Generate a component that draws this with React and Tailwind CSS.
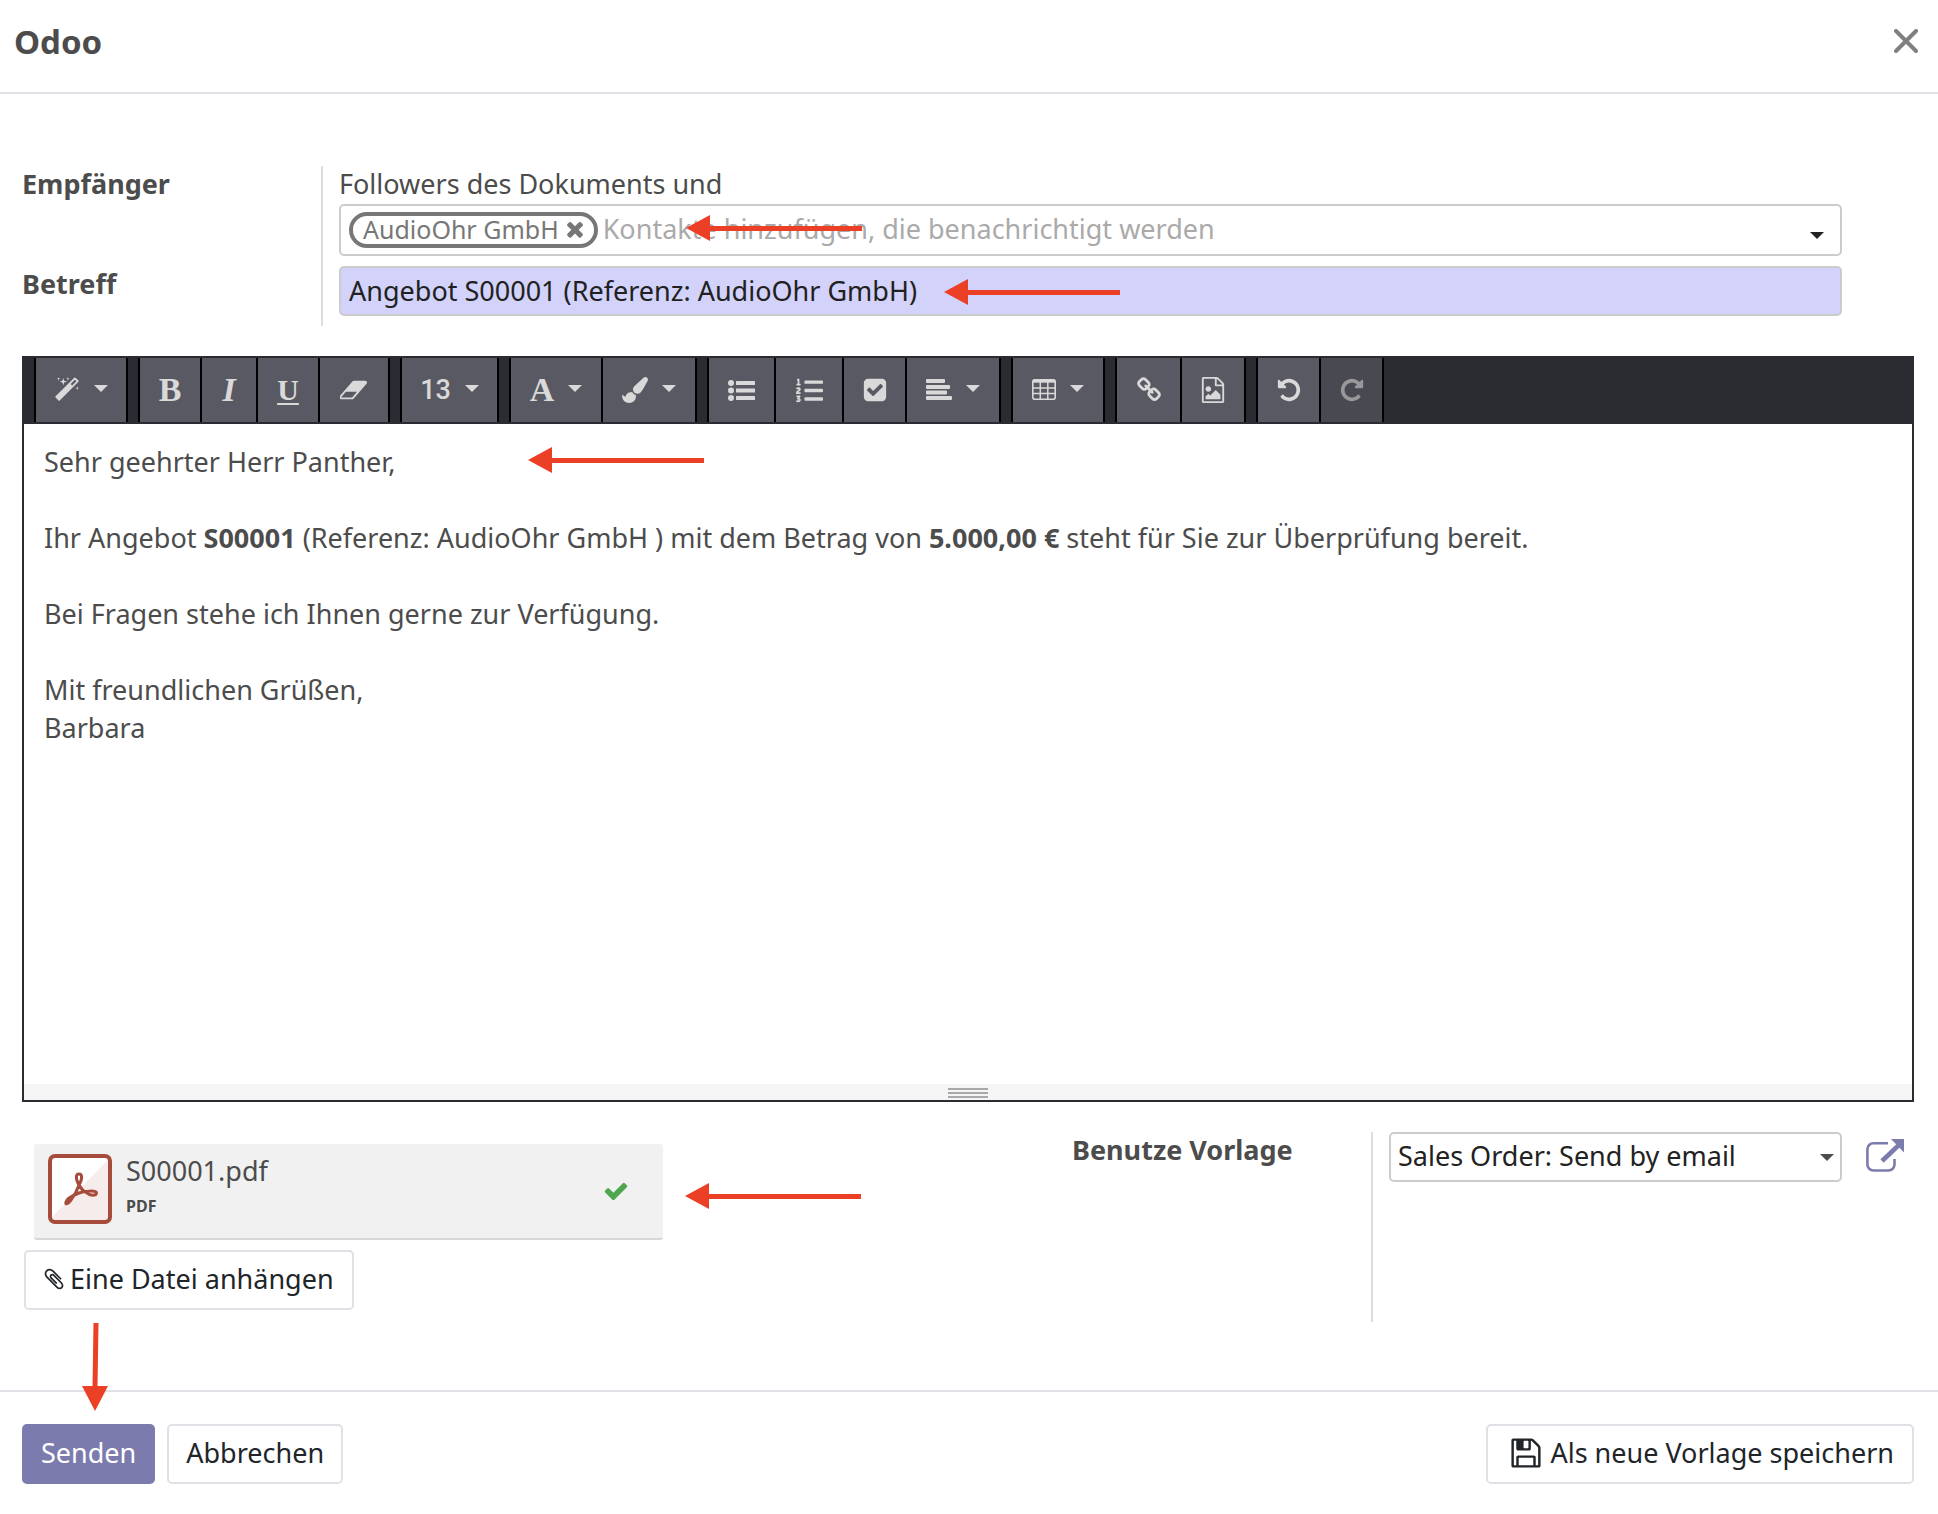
import React, { useState } from 'react';
import { FaListOl } from 'react-icons/fa';

const PATHS = {
  magic: 'M1254 581l293-293-107-107-293 293zm447-293q0 27-18 45l-1286 1286q-18 18-45 18t-45-18l-198-198q-18-18-18-45t18-45l1286-1286q18-18 45-18t45 18l198 198q18 18 18 45zm-1351-190l98 30-98 30-30 98-30-98-98-30 98-30 30-98zm350 162l196 60-196 60-60 196-60-196-196-60 196-60 60-196zm930 478l98 30-98 30-30 98-30-98-98-30 98-30 30-98zm-640-640l98 30-98 30-30 98-30-98-98-30 98-30 30-98z',
  eraser: 'M832 1408l336-384h-768l-336 384h768zm1013-1077q15 34 9.5 71.5t-30.5 65.5l-896 1024q-38 44-96 44h-768q-38 0-69.5-20.5t-47.5-54.5q-15-34-9.5-71.5t30.5-65.5l896-1024q38-44 96-44h768q38 0 69.5 20.5t47.5 54.5z',
  brush: 'M1615 0q70 0 122.5 46.5t52.5 116.5q0 63-45 151-332 629-465 752-97 91-218 91-126 0-216.5-92.5t-90.5-219.5q0-128 92-212l638-579q59-54 130-54zm-909 1034q39 76 106.5 130t150.5 76l1 71q4 213-129.5 347t-348.5 134q-123 0-218-46.5t-152.5-127.5-86.5-183-29-220q7 5 41 30t62 44.5 59 36.5 46 17q41 0 55-37 25-66 57.5-112.5t69.5-76 88-47.5 103-25.5 125-10.5z',
  checkSquare: 'M813 1299l614-614q19-19 19-45t-19-45l-102-102q-19-19-45-19t-45 19l-467 467-211-211q-19-19-45-19t-45 19l-102 102q-19 19-19 45t19 45l358 358q19 19 45 19t45-19zm851-883v960q0 119-84.5 203.5t-203.5 84.5h-960q-119 0-203.5-84.5t-84.5-203.5v-960q0-119 84.5-203.5t203.5-84.5h960q119 0 203.5 84.5t84.5 203.5z',
  link: 'M1520 1216q0-40-28-68l-208-208q-28-28-68-28-42 0-72 32 3 3 19 18.5t21.5 21.5 15 19 13 25.5 3.5 27.5q0 40-28 68t-68 28q-15 0-27.5-3.5t-25.5-13-19-15-21.5-21.5-18.5-19q-33 31-33 73 0 40 28 68l206 207q27 27 68 27 40 0 68-26l147-146q28-28 28-67zm-703-705q0-40-28-68l-206-207q-28-28-68-28-39 0-68 27l-147 146q-28 28-28 67 0 40 28 68l208 208q27 27 68 27 42 0 72-31-3-3-19-18.5t-21.5-21.5-15-19-13-25.5-3.5-27.5q0-40 28-68t68-28q15 0 27.5 3.5t25.5 13 19 15 21.5 21.5 18.5 19q33-31 33-73zm895 705q0 120-85 203l-147 146q-83 83-203 83-121 0-204-85l-206-207q-83-83-83-203 0-123 88-209l-88-88q-86 88-208 88-120 0-204-84l-208-208q-84-84-84-204t85-203l147-146q83-83 203-83 121 0 204 85l206 207q83 83 83 203 0 123-88 209l88 88q86-88 208-88 120 0 204 84l208 208q84 84 84 204z',
  image: 'M1596 380q28 28 48 76t20 88v1152q0 40-28 68t-68 28h-1344q-40 0-68-28t-28-68v-1600q0-40 28-68t68-28h896q40 0 88 20t76 48zm-444-244v376h376q-10-29-22-41l-313-313q-12-12-41-22zm384 1528v-1024h-416q-40 0-68-28t-28-68v-416h-768v1536h1280zm-128-448v320h-1024v-192l192-192 128 128 384-384zm-832-192q-80 0-136-56t-56-136 56-136 136-56 136 56 56 136-56 136-136 56z',
  undo: 'M1664 896q0 156-61 298t-164 245-245 164-298 61q-172 0-327-72.5t-264-204.5q-7-10-6.5-22.5t8.5-20.5l137-138q10-9 25-9 16 2 23 12 73 95 179 147t225 52q104 0 198.5-40.5t163.5-109.5 109.5-163.5 40.5-198.5-40.5-198.5-109.5-163.5-163.5-109.5-198.5-40.5q-98 0-188 35.5t-160 101.5l137 138q31 30 14 69-17 40-59 40h-448q-26 0-45-19t-19-45v-448q0-42 40-59 39-17 69 14l130 129q107-101 244.5-156.5t284.5-55.5q156 0 298 61t245 164 164 245 61 298z',
  times: 'M1490 1322q0 40-28 68l-136 136q-28 28-68 28t-68-28l-294-294-294 294q-28 28-68 28t-68-28l-136-136q-28-28-28-68t28-68l294-294-294-294q-28-28-28-68t28-68l136-136q28-28 68-28t68 28l294 294 294-294q28-28 68-28t68 28l136 136q28 28 28 68t-28 68l-294 294 294 294q28 28 28 68z',
  check: 'M1671 566q0 40-28 68l-724 724-136 136q-28 28-68 28t-68-28l-136-136-362-362q-28-28-28-68t28-68l136-136q28-28 68-28t68 28l294 295 656-657q28-28 68-28t68 28l136 136q28 28 28 68z',
  paperclip: 'M1596 1385q0 117-79 196t-196 79q-135 0-235-100l-777-776q-113-115-113-271 0-159 110-270t269-111q158 0 273 113l605 606q10 10 10 22 0 16-30.5 46.5t-46.5 30.5q-13 0-23-10l-606-607q-79-77-181-77-106 0-179 75t-73 181q0 105 76 181l776 777q63 63 145 63 64 0 106-42t42-106q0-82-63-145l-581-581q-26-24-60-24-29 0-48 19t-19 48q0 32 25 59l410 410q10 10 10 22 0 16-31 47t-47 31q-12 0-22-10l-410-410q-63-61-63-149 0-82 57-139t139-57q88 0 149 63l581 581q100 98 100 235z',
  floppy: 'M512 1536h768v-384h-768v384zm896 0h128v-896q0-14-10-38.5t-20-34.5l-281-281q-10-10-34-20t-39-10v416q0 40-28 68t-68 28h-576q-40 0-68-28t-28-68v-416h-128v1280h128v-416q0-40 28-68t68-28h832q40 0 68 28t28 68v416zm-384-928v-320q0-13-9.5-22.5t-22.5-9.5h-192q-13 0-22.5 9.5t-9.5 22.5v320q0 13 9.5 22.5t22.5 9.5h192q13 0 22.5-9.5t9.5-22.5zm640 32v928q0 40-28 68t-68 28h-1344q-40 0-68-28t-28-68v-1344q0-40 28-68t68-28h928q40 0 88 20t76 48l280 280q28 28 48 76t20 88z',
};

const Icon = ({ name, className = 'size-[26px]', box = '0 0 1792 1792' }) => (
  <svg viewBox={box} fill="currentColor" aria-hidden="true" className={`shrink-0 ${className}`}>
    <path d={PATHS[name]} />
  </svg>
);

const ListIcon = () => (
  <svg viewBox="0 0 27 26" fill="currentColor" aria-hidden="true" className="h-[26px] w-[27px]">
    {[6, 13.5, 21].map(y => (
      <g key={y}>
        <circle cx="3" cy={y} r="3" />
        <rect x="8" y={y - 2} width="19" height="4" rx="0.5" />
      </g>
    ))}
  </svg>
);

const AlignIcon = () => (
  <svg viewBox="0 0 26 26" fill="currentColor" aria-hidden="true" className="size-[26px]">
    <rect y="2" width="19" height="4" rx="1" />
    <rect y="8" width="24" height="4" rx="1" />
    <rect y="13.500" width="21" height="4" rx="1" />
    <rect y="19" width="26" height="4" rx="1" />
  </svg>
);

const TableIcon = () => (
  <svg viewBox="0 0 24 26" fill="none" stroke="currentColor" aria-hidden="true" className="h-[26px] w-6">
    <rect x="0.8" y="2.8" width="22.4" height="19.4" rx="2" strokeWidth="1.6" />
    <path d="M1 4.200h22" strokeWidth="3" />
    <path d="M1 11h22M1 16.500h22M8.300 4v18M15.800 4v18" strokeWidth="1.5" />
  </svg>
);

const ExternalIcon = () => (
  <svg viewBox="0 0 38 33" fill="none" stroke="currentColor" aria-hidden="true" className="h-[33px] w-[38px]">
    <path d="M22 4.200H7.400a6 6 0 0 0-6 6V25.500a6 6 0 0 0 6 6H22.500a6 6 0 0 0 6-6V20" strokeWidth="2.6" />
    <path d="M16 22L34 5" strokeWidth="4.600" />
    <path d="M25 0h13v13.500z" fill="currentColor" stroke="none" />
  </svg>
);

const Caret = ({ className = '' }) => (
  <svg viewBox="0 0 14 7" fill="currentColor" aria-hidden="true" className={`h-[7px] w-[14px] shrink-0 ${className}`}>
    <path d="M0 0h14l-7 7z" />
  </svg>
);

const Letter = ({ children, className = 'text-[34px]' }) => (
  <span className={`font-['Liberation_Serif',serif] leading-[26px] font-bold ${className}`}>{children}</span>
);

const TOOLBAR = [
  [{ label: 'Stil', icon: <Icon name="magic" />, caret: true, width: 'w-[90px]' }],
  [
    { label: 'Fett', icon: <Letter>B</Letter>, width: 'w-[62px]' },
    { label: 'Kursiv', icon: <Letter className="text-[34px] italic">I</Letter>, width: 'w-[56px]' },
    { label: 'Unterstrichen', icon: <Letter className="text-[30px] underline decoration-2 underline-offset-3">U</Letter>, width: 'w-[62px]' },
    { label: 'Formatierung entfernen', icon: <Icon name="eraser" box="0 0 1920 1792" className="h-[26px] w-[28px]" />, width: 'w-[68px]' },
  ],
  [{ label: 'Schriftgröße', icon: <span className="font-['Roboto',sans-serif] text-[27px] leading-[26px] font-medium">13</span>, caret: true, width: 'w-[95px]' }],
  [
    { label: 'Schriftfarbe', icon: <Letter>A</Letter>, caret: true, width: 'w-[92px]' },
    { label: 'Hintergrundfarbe', icon: <Icon name="brush" />, caret: true, width: 'w-[92px]' },
  ],
  [
    { label: 'Aufzählung', icon: <ListIcon />, width: 'w-[67px]' },
    { label: 'Nummerierte Liste', icon: <FaListOl aria-hidden="true" className="size-[27px]" />, width: 'w-[68px]' },
    { label: 'Checkliste', icon: <Icon name="checkSquare" />, width: 'w-[63px]' },
    { label: 'Absatz', icon: <AlignIcon />, caret: true, width: 'w-[92px]' },
  ],
  [{ label: 'Tabelle', icon: <TableIcon />, caret: true, width: 'w-[90px]' }],
  [
    { label: 'Link', icon: <Icon name="link" />, width: 'w-[65px]' },
    { label: 'Bild', icon: <Icon name="image" />, width: 'w-[62px]' },
  ],
  [
    { label: 'Rückgängig', icon: <Icon name="undo" />, width: 'w-[63px]' },
    { label: 'Wiederholen', icon: <Icon name="undo" className="size-[26px] -scale-x-100" />, disabled: true, width: 'w-[61px]' },
  ],
];

const Toolbar = () => (
  <div role="toolbar" className="flex flex-wrap gap-[10px] border-y-2 border-[#2b2b32] bg-[#2b2b32] pl-[10px]">
    {TOOLBAR.map((group, i) => (
      <div key={i} className="flex divide-x-2 divide-black border-x-2 border-black">
        {group.map(({ label, icon, caret, width, disabled }) => (
          <button
            key={label}
            type="button"
            aria-label={label}
            disabled={disabled}
            className={`flex h-16 items-center justify-center gap-[14px] ${width} ${
              disabled ? 'bg-[#494951] text-[#98989a]' : 'bg-[#595963] text-[#d9d9d9] hover:bg-[#494951]'
            }`}
          >
            {icon}
            {caret && <Caret className="mb-1" />}
          </button>
        ))}
      </div>
    ))}
  </div>
);

// Red pointer, its tip lies on the left end
const Arrow = ({ className }) => (
  <svg viewBox="0 0 176 26" aria-hidden="true" className={`pointer-events-none absolute h-[26px] w-[176px] ${className}`}>
    <path d="M0 13L24 0v26z" fill="#eb4025" />
    <path d="M22 13.500h154" stroke="#eb4025" strokeWidth="5" />
  </svg>
);

const ArrowDown = ({ className }) => (
  <svg viewBox="0 0 26 88" aria-hidden="true" className={`pointer-events-none absolute h-[88px] w-[26px] ${className}`}>
    <path d="M13 88L0 63h26z" fill="#eb4025" />
    <path d="M14 0L13 65" stroke="#eb4025" strokeWidth="5" />
  </svg>
);

const PdfIcon = () => (
  <svg viewBox="0 0 64 70" aria-hidden="true" className="h-[70px] w-16 shrink-0">
    <rect x="2" y="2" width="60" height="66" rx="5" fill="#fff" />
    <path d="M62 4v60q0 4-4 4H4v-5z" fill="#f6eceb" />
    <rect x="2" y="2" width="60" height="66" rx="5" fill="none" stroke="#a64c3c" strokeWidth="4" />
    <path
      d="M31 31C27 24 28 20 31 20C34 20 35 24 31 31C29 37 26 42 23 46C20 50 17 51 18 48C19 44 26 41 31 39C37 37 48 36 48.500 39C48 42 43 42 39 39C35 37 33 35 31 31z"
      fill="none"
      stroke="#a64c3c"
      strokeWidth="3"
      strokeLinejoin="round"
    />
  </svg>
);

const buttonClass = 'flex h-[60px] items-center rounded-[5px] border-2 border-[#dee2e6] bg-white pb-[2px] text-[#212529] hover:bg-gray-50';

export default function App() {
  const [partner, setPartner] = useState('AudioOhr GmbH');
  const [subject, setSubject] = useState('Angebot S00001 (Referenz: AudioOhr GmbH)');

  return (
    <div className="flex min-h-screen flex-col bg-white font-['Noto_Sans',sans-serif] text-[27px] leading-[38px] text-[#4c4c4c]">
      <header className="flex items-center justify-between border-b-2 border-[#dee2e6] pt-5 pr-5 pb-7 pl-[14px]">
        <h1 className="text-[33px] leading-[44px] font-bold">Odoo</h1>
        <button type="button" aria-label="Schließen" className="pb-[2px] text-[#808080]">
          <svg viewBox="0 0 24 24" fill="none" stroke="currentColor" strokeWidth="4" strokeLinecap="round" className="size-6">
            <path d="M2 2l20 20M22 2L2 22" />
          </svg>
        </button>
      </header>

      <main className="pt-[72px] pr-6 pl-[22px]">
        <div className="grid grid-cols-[299px_1fr] pr-[72px]">
          <div className="flex flex-col gap-16 leading-[36px] font-bold">
            <label htmlFor="partner">Empfänger</label>
            <label htmlFor="subject">Betreff</label>
          </div>
          <div className="border-l-2 border-[#dddddd] pb-[10px] pl-4">
            <p className="mb-[2px] leading-[36px]">Followers des Dokuments und</p>
            <div className="relative flex h-[52px] items-center gap-[5px] rounded-[5px] border-2 border-[#cccccc] px-2">
              {partner && (
                <span className="flex h-9 items-center gap-1 rounded-full border-4 border-[#777777] pr-[7px] pb-[2px] pl-[10px] text-[25px] text-[#777777]">
                  {partner}
                  <button type="button" aria-label="Entfernen" onClick={() => setPartner('')}>
                    <Icon name="times" className="size-6" />
                  </button>
                </span>
              )}
              <input
                id="partner"
                type="text"
                placeholder="Kontakte hinzufügen, die benachrichtigt werden"
                className="min-w-0 flex-1 pb-[2px] outline-none placeholder:text-[#aaaaaa]"
              />
              <Caret className="mt-[10px] mr-2 text-[#222222]" />
              <Arrow className="top-[9px] left-[345px]" />
            </div>
            <div className="relative mt-[10px]">
              <input
                id="subject"
                type="text"
                value={subject}
                onChange={e => setSubject(e.target.value)}
                className="h-[50px] w-full rounded-[5px] border-2 border-[#cccccc] bg-[#d2d2fa] px-2 pb-[2px] text-[#212121] outline-none"
              />
              <Arrow className="top-[13px] left-[605px]" />
            </div>
          </div>
        </div>

        <section className="relative mt-[30px] border-2 border-t-0 border-[#2b2b32]">
          <Toolbar />
          <div className="min-h-[660px] px-5 pt-[19px]">
            <p>Sehr geehrter Herr Panther,</p>
            <br />
            <p>
              Ihr Angebot <strong>S00001</strong> (Referenz: AudioOhr GmbH ) mit dem Betrag von <strong>5.000,00 €</strong> steht für Sie zur Überprüfung bereit.
            </p>
            <br />
            <p>Bei Fragen stehe ich Ihnen gerne zur Verfügung.</p>
            <br />
            <p>Mit freundlichen Grüßen,</p>
            <p>Barbara</p>
          </div>
          <div className="flex h-4 cursor-ns-resize flex-col items-center gap-[2px] bg-[#f5f5f5] pt-1">
            <span className="h-[2px] w-10 bg-[#a9a9a9]" />
            <span className="h-[2px] w-10 bg-[#a9a9a9]" />
            <span className="h-[2px] w-10 bg-[#a9a9a9]" />
          </div>
          <Arrow className="top-[91px] left-[504px]" />
        </section>

        <div className="mt-[30px] flex justify-between">
          <div className="pt-3 pl-[2px]">
            <div className="relative ml-[10px] flex w-[629px] gap-[14px] rounded-[3px] border-b-2 border-[#d8d8d8] bg-[#f1f1f1] pt-[10px] pr-[34px] pb-[14px] pl-[14px]">
              <PdfIcon />
              <div className="flex-1">
                <p className="leading-[34px]">S00001.pdf</p>
                <p className="text-[16px] leading-[36px] font-bold">PDF</p>
              </div>
              <Icon name="check" className="mt-1 size-[26px] self-center text-[#4fa64f]" />
              <Arrow className="top-[39px] left-[651px]" />
            </div>
            <button type="button" className={`${buttonClass} mt-[10px] gap-1 pr-[18px] pl-4`}>
              <Icon name="paperclip" className="size-6" />
              Eine Datei anhängen
            </button>
          </div>

          <div className="flex">
            <label htmlFor="template" className="w-[299px] leading-[36px] font-bold">Benutze Vorlage</label>
            <div className="flex h-[190px] items-start gap-6 border-l-2 border-[#dddddd] pl-4">
              <div className="relative flex w-[453px] items-center">
                <select
                  id="template"
                  className="h-[50px] w-full appearance-none rounded-[5px] border-2 border-[#cccccc] bg-white px-[7px] pb-[2px] text-[#222222] outline-none"
                >
                  <option>Sales Order: Send by email</option>
                </select>
                <Caret className="pointer-events-none absolute right-2 text-[#4c4c4c]" />
              </div>
              <button type="button" aria-label="Externer Link" className="mt-[7px] mr-[10px] text-[#7c7bad]">
                <ExternalIcon />
              </button>
            </div>
          </div>
        </div>
      </main>

      <footer className="relative mt-[68px] flex items-center gap-3 border-t-2 border-[#dee2e6] pt-8 pr-6 pl-[22px]">
        <button type="button" className="h-[60px] rounded-[5px] bg-[#7c7bad] px-[19px] pb-[2px] text-white hover:bg-[#6a69a0]">Senden</button>
        <button type="button" className={`${buttonClass} px-[17px]`}>Abbrechen</button>
        <button type="button" className={`${buttonClass} ml-auto gap-[7px] pr-[18px] pl-[21px]`}>
          <Icon name="floppy" className="size-[34px]" />
          Als neue Vorlage speichern
        </button>
        <ArrowDown className="-top-[69px] left-[82px]" />
      </footer>
    </div>
  );
}
